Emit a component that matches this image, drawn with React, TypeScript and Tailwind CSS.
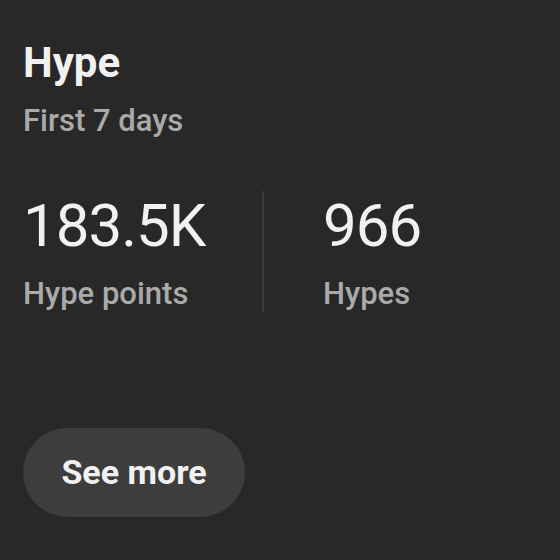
import React from 'react';

const Stat: React.FC<{ value: string; label: string }> = ({ value, label }) => (
  <div className="flex flex-col">
    <span className="text-[60px] leading-[70px] tracking-[-1px] text-[#f1f1f1]">{value}</span>
    <span className="text-[31px] leading-[36px] font-medium text-[#aaaaaa] mt-[15px]">{label}</span>
  </div>
);

const App: React.FC = () => {
  return (
    <div
      className="w-[560px] h-[560px] bg-[#282828] pl-[23px] pt-[38px] flex flex-col"
      style={{ fontFamily: 'Roboto, "Liberation Sans", sans-serif' }}
    >
      {/* Header */}
      <h2 className="text-[42px] leading-[50px] font-bold text-[#f1f1f1]">Hype</h2>
      <p className="text-[31px] leading-[36px] font-medium text-[#aaaaaa] mt-[15px]">First 7 days</p>

      {/* Stats */}
      <div className="flex items-stretch mt-[52px]">
        <div className="w-[239px]">
          <Stat value="183.5K" label="Hype points" />
        </div>
        <div className="w-[2px] bg-[#3a3a3a]" />
        <div className="pl-[59px]">
          <Stat value="966" label="Hypes" />
        </div>
      </div>

      <button className="mt-[116px] w-[222px] h-[89px] rounded-full bg-[#3d3d3d] text-[34px] font-bold text-[#f1f1f1]">
        See more
      </button>
    </div>
  );
};

export default App;
